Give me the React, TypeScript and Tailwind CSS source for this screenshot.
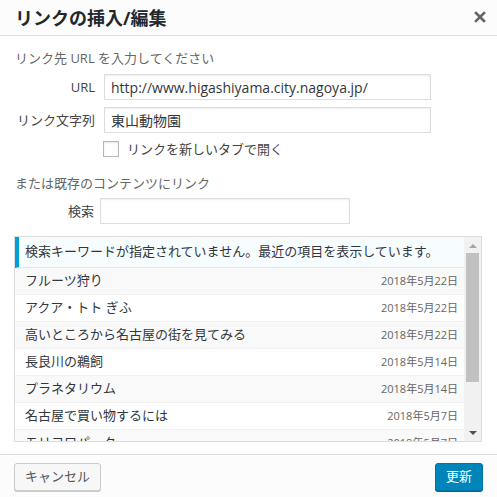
import React from "react";

type Item = { title: string; date: string };

const items: Item[] = [
  { title: "フルーツ狩り", date: "2018年5月22日" },
  { title: "アクア・トト ぎふ", date: "2018年5月22日" },
  { title: "高いところから名古屋の街を見てみる", date: "2018年5月22日" },
  { title: "長良川の鵜飼", date: "2018年5月14日" },
  { title: "プラネタリウム", date: "2018年5月14日" },
  { title: "名古屋で買い物するには", date: "2018年5月7日" },
  { title: "モリコロパーク", date: "2018年5月7日" },
];

const font = { fontFamily: '"Open Sans", "Noto Sans CJK JP", sans-serif' };

export default function App() {
  return (
    <div className="w-[497px] h-[497px] flex flex-col bg-white overflow-hidden" style={font}>
      {/* Header */}
      <div className="h-[36px] shrink-0 flex items-center justify-between pl-[15px] pr-[11px] bg-[#fcfcfc] border-b border-[#dddddd]">
        <h1 className="text-[18px] font-bold text-[#23282d] leading-[24px]">リンクの挿入/編集</h1>
        <svg width="12" height="12" viewBox="0 0 12 12" className="mt-[-1px]">
          <path d="M2 2 L10 10 M10 2 L2 10" stroke="#666" strokeWidth="2.6" strokeLinecap="square" />
        </svg>
      </div>

      {/* Body */}
      <div className="flex-1 flex flex-col px-[14px] pt-[12px]">
        <p className="pl-[1px] text-[13px] leading-[20px] text-[#666]">リンク先 URL を入力してください</p>

        <div className="mt-[6px] flex items-center">
          <label className="w-[81px] text-right text-[13px] text-[#444] leading-[20px]">URL</label>
          <div className="ml-[9px] w-[327px] h-[26px] border border-[#dddddd] shadow-[inset_0_1px_2px_rgba(0,0,0,0.07)] flex items-center px-[6px] text-[14px] text-[#32373c]">
            http://www.higashiyama.city.nagoya.jp/
          </div>
        </div>

        <div className="mt-[7px] flex items-center">
          <label className="w-[81px] text-right text-[13px] text-[#444] leading-[20px]">リンク文字列</label>
          <div className="ml-[9px] w-[327px] h-[26px] border border-[#dddddd] shadow-[inset_0_1px_2px_rgba(0,0,0,0.07)] flex items-center px-[6px] text-[14px] text-[#32373c]">
            東山動物園
          </div>
        </div>

        <div className="mt-[8px] h-[16px] flex items-center pl-[89px]">
          <span className="w-[16px] h-[16px] border border-[#b4b9be] bg-white shadow-[inset_0_1px_2px_rgba(0,0,0,0.1)]" />
          <span className="ml-[8px] text-[13px] text-[#444] leading-[16px]">リンクを新しいタブで開く</span>
        </div>

        <p className="mt-[16px] pl-[1px] text-[13px] leading-[20px] text-[#666]">または既存のコンテンツにリンク</p>

        <div className="mt-[5px] flex items-center">
          <label className="w-[80px] text-right text-[13px] text-[#444] leading-[20px]">検索</label>
          <div className="ml-[6px] w-[250px] h-[26px] border border-[#dddddd] shadow-[inset_0_1px_2px_rgba(0,0,0,0.07)]" />
        </div>

        {/* Results */}
        <div className="mt-[12px] w-[468px] h-[206px] border border-[#dddddd] flex overflow-hidden">
          <div className="flex-1 flex flex-col overflow-hidden">
            <div className="h-[31px] shrink-0 flex items-center bg-[#f7fcfe] border-l-4 border-[#00a0d2] border-b border-b-[#e5e5e5] pl-[6px] text-[13px] text-[#32373c]">
              検索キーワードが指定されていません。最近の項目を表示しています。
            </div>
            {items.map((it, i) => (
              <div
                key={i}
                className={`h-[27px] shrink-0 flex items-center justify-between pl-[10px] pr-[6px] border-b border-[#f1f1f1] ${
                  i % 2 === 0 ? "bg-[#f9f9f9]" : "bg-white"
                }`}
              >
                <span className="text-[13px] text-[#32373c]">{it.title}</span>
                <span className="text-[11px] text-[#666]">{it.date}</span>
              </div>
            ))}
          </div>
          {/* Scrollbar */}
          <div className="w-[17px] shrink-0 bg-[#f1f1f1] flex flex-col items-center">
            <div className="h-[16px] flex items-center justify-center">
              <svg width="8" height="5" viewBox="0 0 8 5">
                <path d="M0 5 L4 1 L8 5 Z" fill="#a3a3a3" />
              </svg>
            </div>
            <div className="w-[13px] h-[129px] bg-[#c1c1c1]" />
            <div className="flex-1" />
            <div className="h-[16px] flex items-center justify-center">
              <svg width="8" height="5" viewBox="0 0 8 5">
                <path d="M0 0 L8 0 L4 4 Z" fill="#505050" />
              </svg>
            </div>
          </div>
        </div>
      </div>

      {/* Footer */}
      <div className="h-[43px] shrink-0 border-t border-[#dddddd] bg-[#fcfcfc] flex items-start justify-between px-[14px] pt-[8px]">
        <button className="h-[28px] w-[87px] border border-[#cccccc] bg-[#f7f7f7] rounded-[3px] shadow-[0_1px_0_#cccccc] text-[13px] text-[#555]">
          キャンセル
        </button>
        <button className="h-[28px] w-[48px] border border-[#0073aa] bg-[#0085ba] rounded-[3px] shadow-[0_1px_0_#006799] text-[13px] text-white">
          更新
        </button>
      </div>
    </div>
  );
}
